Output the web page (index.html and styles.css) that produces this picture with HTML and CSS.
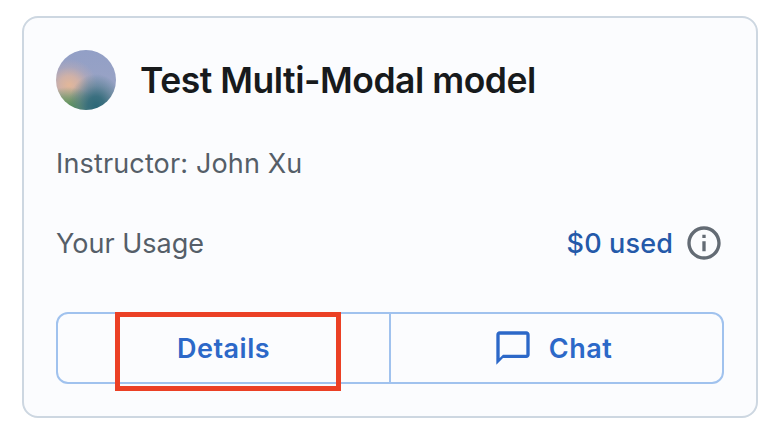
FILE: index.html
```html
<!DOCTYPE html>
<html lang="en">
<head>
<meta charset="utf-8">
<title>Test Multi-Modal model</title>
<link rel="stylesheet" href="styles.css">
</head>
<body>
<article class="card">
  <header class="header">
    <span class="avatar"></span>
    <h1 class="title">Test Multi-Modal model</h1>
  </header>
  <p class="instructor">Instructor: John Xu</p>
  <div class="usage">
    <span class="usage-label">Your Usage</span>
    <span class="usage-value"><span class="amount">$0 used</span>
      <svg class="icon info" viewBox="0 0 24 24"><path d="M11 7h2v2h-2zm0 4h2v6h-2zm1-9C6.480 2 2 6.480 2 12s4.480 10 10 10 10-4.480 10-10S17.520 2 12 2zm0 18c-4.410 0-8-3.590-8-8s3.590-8 8-8 8 3.590 8 8-3.590 8-8 8z"/></svg>
    </span>
  </div>
  <div class="actions">
    <button class="action"><span class="label">Details</span><span class="highlight"></span></button>
    <button class="action action-chat"><svg class="icon" viewBox="0 0 24 24"><path d="M20 2H4c-1.100 0-2 .9-2 2v18l4-4h14c1.100 0 2-.9 2-2V4c0-1.100-.9-2-2-2zm0 14H6l-2 2V4h16v12z"/></svg><span class="label">Chat</span></button>
  </div>
</article>
</body>
</html>
```
FILE: styles.css
```css
* { box-sizing: border-box; }
body {
  margin: 0;
  padding: 16px 20px 26px 22px;
  background: #fff;
  font-family: Inter, "Liberation Sans", sans-serif;
  font-size: 27px;
}
.card {
  height: 402px;
  padding: 32px;
  border: 2px solid #cdd7e1;
  border-radius: 16px;
  background: #fbfcfe;
}
.header { display: flex; align-items: center; gap: 24px; height: 60px; }
.avatar {
  width: 60px;
  height: 60px;
  border-radius: 50%;
  background:
    radial-gradient(ellipse 28px 32px at 40px 56px, #2d6878 0%, #326b7ae6 30%, #3f728080 62%, #3f728000 100%),
    radial-gradient(ellipse 32px 22px at 12px 59px, #519050 0%, #6f9960cc 45%, #8b9e7a00 100%),
    radial-gradient(ellipse 28px 26px at 13px 35px, #e2b799 0%, #deb5a0cc 35%, #cbaead55 70%, #cbaead00 100%),
    linear-gradient(#929fc6 0%, #99a3c5 60%, #8997ad 100%);
}
.title {
  margin: 0;
  padding-top: 2px;
  font-size: 35.5px;
  font-weight: 600;
  line-height: 48px;
  letter-spacing: -0.48px;
  color: #171a1c;
  white-space: nowrap;
}
.instructor {
  margin: 33px 0 0;
  line-height: 42px;
  letter-spacing: 0.15px;
  color: #555e68;
}
.usage {
  display: flex;
  justify-content: space-between;
  align-items: center;
  height: 40px;
  margin-top: 38px;
  color: #555e68;
}
.usage-label, .amount { padding-top: 1px; }
.usage-value { display: flex; align-items: center; gap: 11px; }
.amount { font-weight: 500; letter-spacing: 0.15px; color: #2459a9; }
.icon { display: block; width: 40px; height: 40px; fill: #2c68c8; }
.info { fill: #636b74; }
.actions {
  display: grid;
  grid-template-columns: 331px 1fr;
  height: 72px;
  margin-top: 49px;
  border: 2px solid #a0c2ee;
  border-radius: 12px;
}
.action {
  position: relative;
  display: flex;
  align-items: center;
  justify-content: center;
  gap: 16px;
  padding: 0;
  border: 0;
  background: none;
  color: #2c68c8;
  font: 600 27px Inter, "Liberation Sans", sans-serif;
  letter-spacing: 0.5px;
}
.label { padding-top: 2px; line-height: 32px; }
.action-chat { padding-right: 8px; border-left: 2px solid #a0c2ee; }
.highlight {
  position: absolute;
  top: -2px;
  left: 57px;
  width: 226px;
  height: 79px;
  border: 5px solid #eb4025;
}
```
